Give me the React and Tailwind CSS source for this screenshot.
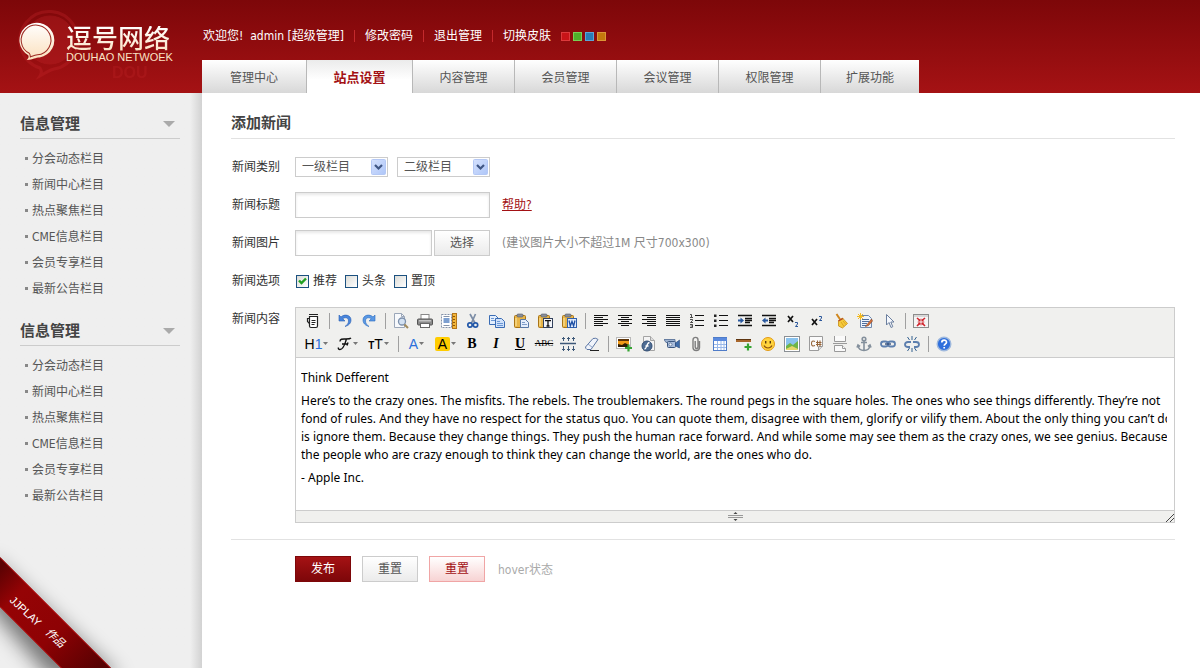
import { Fragment } from 'react';

const topLinks = ['修改密码', '退出管理', '切换皮肤'];

const skins = [
  { name: '红色', className: 'bg-[#c91418] border-[#dd3a3c]' },
  { name: '绿色', className: 'bg-[#4fae2a] border-[#79cf55]' },
  { name: '蓝色', className: 'bg-[#2a7cb5] border-[#5aa6d8]' },
  { name: '橙色', className: 'bg-[#c4780d] border-[#dc9636]' },
];

const tabs = [
  { label: '管理中心', className: 'w-[105px] border-r' },
  { label: '站点设置', className: 'w-[106px] border-r', active: true },
  { label: '内容管理', className: 'w-[102px] border-r' },
  { label: '会员管理', className: 'w-[102px] border-r' },
  { label: '会议管理', className: 'w-[102px] border-r' },
  { label: '权限管理', className: 'w-[102px] border-r' },
  { label: '扩展功能', className: 'w-[98px]' },
];

const menuItems = ['分会动态栏目', '新闻中心栏目', '热点聚焦栏目', 'CME信息栏目', '会员专享栏目', '最新公告栏目'];

/* shared pieces of the toolbar icons */
const Lines = ({ rows }) => (
  <g stroke="#111" strokeWidth="1">
    {rows.map(([x1, x2, y]) => (
      <path key={y} d={`M${x1} ${y}.5H${x2}`} />
    ))}
  </g>
);

const Clipboard = () => (
  <>
    <rect x="1.5" y="2.5" width="11" height="12" rx="1" fill="#e8b548" stroke="#a97415" />
    <rect x="4" y="1" width="6" height="3" rx="1" fill="#8a8f99" stroke="#555b66" strokeWidth=".6" />
    <path d="M3 5v8" stroke="#f8dc8e" strokeWidth="1.4" />
  </>
);

const ChainLink = () => (
  <g fill="none" stroke="#5d7fae" strokeWidth="1.8">
    <rect x="1" y="5.5" width="7" height="5" rx="2.5" />
    <rect x="8" y="5.5" width="7" height="5" rx="2.5" />
    <path d="M5 8h6" stroke="#34507c" strokeWidth="1.4" />
  </g>
);

const undoPath = 'M2 2v6h6L5.8 5.8C8 4 11.500 4.500 11.500 8c0 2.500-1.500 4-3.500 5.500 4-1 6-3.500 6-6.500 0-5-6.500-6.500-10-3z';

const icons = {
  source: (
    <g fill="none" stroke="#222">
      <path d="M4.500 3.500h8v9.500q0 1.500-1.500 1.500H6q-1.500 0-1.500-1.500z" fill="#fff" strokeWidth="1.200" />
      <path d="M4 1.500h9M5 3.500h7M6.500 7.500h4M6.500 9.500h4M6.500 11.500h3" />
      <path d="M4.500 5.500h-2v3l2 2" strokeWidth="1.200" />
    </g>
  ),
  undo: <path d={undoPath} fill="#4a86dc" stroke="#2a5fb4" strokeWidth=".6" />,
  redo: (
    <g transform="matrix(-1 0 0 1 16 0)">
      <path d={undoPath} fill="#5a98e4" stroke="#2a6cc0" strokeWidth=".6" />
    </g>
  ),
  preview: (
    <g fill="none">
      <path d="M1.500.5h7l3 3v11h-10z" fill="#f7f9fc" stroke="#9aa6b8" />
      <path d="M8.500.5v3h3" stroke="#9aa6b8" />
      <circle cx="9" cy="8.500" r="3.500" fill="#d3e2f3" stroke="#7b8fab" strokeWidth="1.300" />
      <path d="M11.500 11.500l3.500 3.500" stroke="#a08a5c" strokeWidth="2" />
    </g>
  ),
  print: (
    <g>
      <rect x="4" y="1.500" width="8" height="5" fill="#fff" stroke="#888" />
      <rect x=".5" y="6" width="15" height="6" rx="1" fill="#8b8b8b" stroke="#555" />
      <rect x="2" y="7" width="12" height="1.500" fill="#c4c4c4" />
      <rect x="3.500" y="10.500" width="9" height="4" fill="#fff" stroke="#666" />
    </g>
  ),
  template: (
    <g>
      <rect x=".5" y="1.500" width="10" height="13" fill="#fff" stroke="#8593a8" strokeDasharray="2 1" />
      <rect x="2.500" y="5" width="6" height="5" fill="#7c9fd0" />
      <path d="M2.500 3.500h6M2.500 12.500h6" stroke="#8593a8" />
      <rect x="11.500" y=".5" width="4" height="15" fill="#f2b63b" stroke="#b4761a" />
      <path d="M12 3.500h2M12 6.500h2M12 9.500h2M12 12.500h2" stroke="#8d5708" />
    </g>
  ),
  cut: (
    <g fill="none">
      <path d="M5 1l5 9M10.500 1L6.500 10" stroke="#7c8da6" strokeWidth="1.700" />
      <circle cx="5" cy="12" r="2.200" stroke="#2459a9" strokeWidth="1.700" />
      <circle cx="10.500" cy="12" r="2.200" stroke="#2459a9" strokeWidth="1.700" />
    </g>
  ),
  copy: (
    <g stroke="#3a6cb4">
      <path d="M.5 2.500h6l3 3v6h-9z" fill="#e3eefc" />
      <path d="M6.500 5.500h6l3 3v6h-9z" fill="#cfe1fa" />
      <path d="M8 8.500h3M8 10.500h6M8 12.500h6M2 5.500h3M2 7.500h4" stroke="#6b97d4" />
    </g>
  ),
  paste: (
    <g>
      <Clipboard />
      <path d="M7.500 6.500h5l3 3v5h-8z" fill="#e5eefb" stroke="#5777a6" />
      <path d="M9 9.500h3M9 11.500h5" stroke="#7f9dc9" />
    </g>
  ),
  plainpaste: (
    <g>
      <Clipboard />
      <rect x="6.500" y="5.500" width="9" height="9" fill="#f4f6fb" stroke="#33415c" />
      <path d="M8 7.700h6M11 7.500v6M9.500 13h3" stroke="#111" strokeWidth="1.300" />
    </g>
  ),
  wordpaste: (
    <g>
      <Clipboard />
      <rect x="6.500" y="5.500" width="9" height="9" fill="#dfeafc" stroke="#3161ad" />
      <path d="M8 7.500l1.300 5.500L11 8.500l1.600 4.500L14 7.500" fill="none" stroke="#1d4fa3" strokeWidth="1.300" />
    </g>
  ),
  left: <Lines rows={[[1, 15, 2], [1, 10, 4], [1, 15, 6], [1, 10, 8], [1, 15, 10], [1, 10, 12]]} />,
  center: <Lines rows={[[1, 15, 2], [4, 12, 4], [1, 15, 6], [4, 12, 8], [1, 15, 10], [4, 12, 12]]} />,
  right: <Lines rows={[[1, 15, 2], [6, 15, 4], [1, 15, 6], [6, 15, 8], [1, 15, 10], [6, 15, 12]]} />,
  full: <Lines rows={[[1, 15, 2], [1, 15, 4], [1, 15, 6], [1, 15, 8], [1, 15, 10], [1, 15, 12]]} />,
  ordered: (
    <g>
      <path d="M1 1.500h1.500V4M1 4.500h3M1 6.500h2.500v1L1.500 9.500H4M1 11.500h2.500v3H1M1.500 13h2" stroke="#222" strokeWidth=".8" fill="none" />
      <Lines rows={[[6, 15, 2], [6, 15, 7], [6, 15, 12]]} />
    </g>
  ),
  unordered: (
    <g>
      <path d="M1 1.500h2.500V4H1zM1 6.500h2.500V9H1zM1 11.500h2.500V14H1z" fill="#222" />
      <Lines rows={[[6, 15, 2], [6, 15, 7], [6, 15, 12]]} />
    </g>
  ),
  indent: (
    <g>
      <path d="M1 2.500h14M8 5.500h7M8 7.500h7M8 9.500h5M1 12.500h14" stroke="#111" strokeWidth="1.500" />
      <path d="M1 6.500h2.500V4.500L7 7.500l-3.500 3v-2H1z" fill="#28589f" />
    </g>
  ),
  outdent: (
    <g>
      <path d="M1 2.500h14M8 5.500h7M8 7.500h7M8 9.500h5M1 12.500h14" stroke="#111" strokeWidth="1.500" />
      <path d="M7 6.500H4.500V4.500L1 7.500l3.500 3v-2H7z" fill="#28589f" />
    </g>
  ),
  sub: (
    <g fill="none">
      <path d="M3 3l5 6M8 3L3 9" stroke="#111" strokeWidth="1.700" />
      <path d="M10 9.500h2.500v1.500L10.500 13.500H13" stroke="#2a579b" />
    </g>
  ),
  sup: (
    <g fill="none">
      <path d="M3 6l5 6M8 6l-5 6" stroke="#111" strokeWidth="1.700" />
      <path d="M10 3.500h2.500V5L10.500 7.500H13" stroke="#2a579b" />
    </g>
  ),
  clear: (
    <g>
      <path d="M3.500 1l4 6" stroke="#d0871f" strokeWidth="2" />
      <path d="M5.500 7.500l4-2.500 5 5.500-5 4.500-4-2z" fill="#f5cb3c" stroke="#c68d15" strokeWidth=".8" />
      <path d="M8 9l3 4.500M10 8l3 3.500" stroke="#d79b1b" strokeWidth=".8" />
      <path d="M5.500 8L10 5.500" stroke="#b4412a" strokeWidth="1.300" />
    </g>
  ),
  quickformat: (
    <g>
      <path d="M3.500 2.500h8l3 3v9h-11z" fill="#edf3fc" stroke="#7089ad" />
      <path d="M5 6.500h7M5 8.500h7M5 10.500h5M5 12.500h4" stroke="#4f6f9e" />
      <path d="M14.500 6L8.500 13.500l3-1L15.500 8z" fill="#d9703a" stroke="#7e3c1a" strokeWidth=".6" />
      <path d="M3.500 0v7M0 3.500h7M1 1l5 5M6 1L1 6" stroke="#f3b91f" />
    </g>
  ),
  selectall: <path d="M5.500 1.500v10.500l2.500-2.500 2 5 1.800-.8-2-4.700H13z" fill="#f5f8fd" stroke="#6b7f9e" />,
  fullscreen: (
    <g>
      <rect x=".5" y="1.500" width="15" height="13" fill="#f5f5f5" stroke="#8c8c8c" />
      <path d="M1 3h14" stroke="#bbb" />
      <path d="M4 5l3 2.500M12 5L9 7.500M4 13l3-3M12 13l-3-3" stroke="#d0232b" strokeWidth="1.600" />
      <path d="M7.500 5.500v3h-3zM8.500 5.500v3h3zM7.500 12.500v-3h-3zM8.500 12.500v-3h3z" fill="#d0232b" />
    </g>
  ),
  lineheight: (
    <g stroke="#3d5878" fill="none">
      <path d="M0 7.500h16" strokeWidth="1.500" />
      <path d="M3.500 1v4M8.500 1v4M13.500 1v4M3.500 10v5M8.500 10v5M13.500 10v5" />
      <path d="M2 2.500h3M7 2.500h3M12 2.500h3M2 13.500h3M7 13.500h3M12 13.500h3" />
    </g>
  ),
  eraser: (
    <g>
      <path d="M1.500 11L9 2.500q3-1 5 1L7 13.500H3q-1.500-1-1.500-2.500z" fill="#f0f4fb" stroke="#5c76a3" />
      <path d="M4 8l4.500 3.500" stroke="#8ea4c9" />
      <path d="M6 14.500h9" stroke="#222" />
    </g>
  ),
  image: (
    <g>
      <rect x=".5" y="1.500" width="14" height="11" fill="#fff" stroke="#b9b9b9" />
      <rect x="2" y="3" width="11" height="8" fill="#f09a17" />
      <path d="M2 3h11v2H2z" fill="#5c3307" />
      <path d="M2 11V8l4 1 3-2 4 2v2z" fill="#2e1c06" />
      <path d="M12.500 8.500v7M9 12h7" stroke="#36a534" strokeWidth="2.200" />
    </g>
  ),
  flash: (
    <g>
      <path d="M3.500.5h7l4 4v10h-11z" fill="#f4f4f4" stroke="#a4a4a4" />
      <path d="M10.500.5v4h4" fill="#ddd" stroke="#a4a4a4" />
      <circle cx="7" cy="10" r="5" fill="#4d6c93" stroke="#314d74" />
      <path d="M9.500 6.500c-3 0-2.500 6.500-5 6.500M5.500 10h3" stroke="#fff" strokeWidth="1.300" fill="none" />
    </g>
  ),
  media: (
    <g>
      <path d="M0 3.500h11v3H2z" fill="#9db3d1" stroke="#4e6890" strokeWidth=".8" />
      <rect x="3.500" y="5.500" width="8" height="6" rx="1" fill="#a9bddb" stroke="#3c5880" />
      <path d="M11.500 7L15.500 4v8l-4-2z" fill="#3e6ba8" stroke="#2a4d80" strokeWidth=".6" />
      <circle cx="6.500" cy="8.500" r="1.500" fill="#f0f5fc" stroke="#3c5880" strokeWidth=".6" />
    </g>
  ),
  file: (
    <path
      d="M11.500 5v6.500c0 4-6.500 4-6.500 0V4c0-3.500 5-3.500 5 0v7c0 2-2.800 2-2.800 0V5"
      fill="none"
      stroke="#7d7d7d"
      strokeWidth="1.400"
    />
  ),
  table: (
    <g>
      <rect x="1.500" y="1.500" width="13" height="13" fill="#fff" stroke="#4f7cc8" />
      <path d="M1 2h14v3H1z" fill="#5a8ade" />
      <path d="M2 8.500h12M2 11.500h12M5.500 5v9M9 5v9M12 5v9" stroke="#9ab9ea" />
    </g>
  ),
  hr: (
    <g>
      <rect x="0" y="3" width="15" height="3" fill="#a8672c" />
      <path d="M0 3.500h15" stroke="#5e3510" />
      <path d="M12 7.500v7M8.500 11h7" stroke="#36a534" strokeWidth="2.200" />
    </g>
  ),
  emoticons: (
    <g>
      <circle cx="8" cy="8" r="6.500" fill="#ffd33c" stroke="#e39a16" />
      <path d="M5.700 5v2.500M10.300 5v2.500" stroke="#5b3a0c" strokeWidth="1.400" />
      <path d="M4 9.500c1.500 3.300 6.500 3.300 8 0" fill="none" stroke="#8f520e" strokeWidth="1.100" />
    </g>
  ),
  map: (
    <g>
      <rect x=".5" y=".5" width="15" height="15" fill="#fff" stroke="#8a8f94" />
      <rect x="2" y="2" width="12" height="12" fill="#8ac3ee" />
      <path d="M2 10l4-3 3 2 5-4v9H2z" fill="#6fb547" />
      <path d="M2 13l6-3 6 3v1H2z" fill="#e6d66c" />
    </g>
  ),
  code: (
    <g>
      <path d="M1.500.5h13v10l-4 4h-9z" fill="#fbfbfb" stroke="#9b9b9b" />
      <path d="M14.500 10.500h-4v4" fill="#ddd" stroke="#9b9b9b" />
      <path d="M7 5.500q-3.500-1.500-3.500 2T7 9.500M9.500 4.500v6M12 4.500v6M8 6.500h5.500M8 8.500h5.500" fill="none" stroke="#96653a" strokeWidth="1.100" />
    </g>
  ),
  pagebreak: (
    <g fill="#fafafa" stroke="#9a9a9a">
      <path d="M2.500 0v5.500h11V0" />
      <path d="M2.500 15.500v-6h8l3 3v3z" />
      <path d="M1 7.500h14" />
      <path d="M10.500 9.500v3h3" />
    </g>
  ),
  anchor: (
    <g fill="none" stroke="#84909c" strokeWidth="1.600">
      <circle cx="8" cy="3" r="1.800" />
      <path d="M8 5v9.500M5 6.500h6M2 9.500c.5 3.500 3 5 6 5s5.500-1.500 6-5M1 11.500l1-2.500 2 1.500M15 11.500L14 9l-2 1.500" />
    </g>
  ),
  link: <ChainLink />,
  unlink: (
    <g>
      <g fill="none" stroke="#5d7fae" strokeWidth="1.800">
        <path d="M7 6H4q-3 0-3 2.500T4 11h2M9 6h3q3 0 3 2.500T12 11h-2" />
      </g>
      <path d="M8 0v4M3.500 1l2 3M12.500 1l-2 3M8 16v-4M3.500 15l2-3M12.500 15l-2-3" stroke="#33608f" />
    </g>
  ),
  about: (
    <g>
      <circle cx="8" cy="8" r="6.800" fill="#2f6fdc" stroke="#9fb9dd" strokeWidth="1.400" />
      <path d="M5.800 6.500c0-3 4.700-3 4.700-.3 0 1.700-2.300 1.700-2.300 3.600M8.200 11v1.500" stroke="#fff" strokeWidth="1.700" fill="none" />
    </g>
  ),
};

const rowOne = [
  ['source'],
  ['undo', 'redo'],
  ['preview', 'print', 'template', 'cut', 'copy', 'paste', 'plainpaste', 'wordpaste'],
  ['left', 'center', 'right', 'full', 'ordered', 'unordered', 'indent', 'outdent', 'sub', 'sup', 'clear', 'quickformat', 'selectall'],
  ['fullscreen'],
];

const insertTools = ['image', 'flash', 'media', 'file', 'table', 'hr', 'emoticons', 'map', 'code', 'pagebreak', 'anchor', 'link', 'unlink'];

function Tool({ name }) {
  return (
    <button type="button" aria-label={name} className="flex h-[23px] w-6 shrink-0 items-center justify-center">
      <svg width="16" height="16" viewBox="0 0 16 16" aria-hidden="true">
        {icons[name]}
      </svg>
    </button>
  );
}

function Divider() {
  return (
    <span className="flex w-2 shrink-0 items-center justify-center">
      <span className="h-4 w-px bg-[#a0a0a0]" />
    </span>
  );
}

function DropTool({ label, className, children }) {
  return (
    <button
      type="button"
      aria-label={label}
      className={`flex h-[23px] shrink-0 items-center justify-center gap-px text-sm leading-none text-black ${className}`}
    >
      {children}
      <svg width="5" height="3" viewBox="0 0 5 3" aria-hidden="true">
        <path d="M0 0h5L2.500 3z" fill="#777" />
      </svg>
    </button>
  );
}

function LetterTool({ label, className, children }) {
  return (
    <button
      type="button"
      aria-label={label}
      className={`flex h-[23px] w-6 shrink-0 items-center justify-center font-['Liberation_Serif'] leading-none text-black ${className}`}
    >
      {children}
    </button>
  );
}

function Editor() {
  return (
    <div className="min-w-0 flex-1 border border-[#ccc]">
      <div className="border-b border-[#ccc] bg-[#f0f0ee] px-[5px] pt-px pb-[2px]">
        <div className="flex">
          {rowOne.map((group, i) => (
            <Fragment key={group[0]}>
              {i > 0 && <Divider />}
              {group.map((name) => (
                <Tool key={name} name={name} />
              ))}
            </Fragment>
          ))}
        </div>
        <div className="flex font-['Liberation_Sans']">
          <DropTool label="段落" className="w-[31px]">
            <span>H<span className="text-[#2a6fdb]">1</span></span>
          </DropTool>
          <DropTool label="字体" className="w-[31px]">
            <svg width="15" height="14" viewBox="0 0 15 14" fill="none" stroke="#111" strokeWidth="1.400" aria-hidden="true">
              <path d="M3 4.500C3 1.500 6 2 9 2s4 0 5-1M9.500 2C8 6 7 12.500 3 12.500c-1.500 0-2-1-1.500-2M5 7h6M11 5.500l-1 3" />
            </svg>
          </DropTool>
          <DropTool label="文字大小" className="w-[31px]">
            <span><span className="text-[10px] font-bold">T</span>T</span>
          </DropTool>
          <Divider />
          <DropTool label="文字颜色" className="w-[29px]">
            <span className="text-[#2a6fdb]">A</span>
          </DropTool>
          <DropTool label="文字背景" className="w-[29px]">
            <span className="rounded-xs bg-[#ffcc00] px-[3px]">A</span>
          </DropTool>
          <LetterTool label="粗体" className="text-sm font-black">B</LetterTool>
          <LetterTool label="斜体" className="text-sm font-bold italic">I</LetterTool>
          <LetterTool label="下划线" className="text-sm font-bold underline">U</LetterTool>
          <LetterTool label="删除线" className="text-[9px] line-through">ABC</LetterTool>
          <Tool name="lineheight" />
          <Tool name="eraser" />
          <Divider />
          {insertTools.map((name) => (
            <Tool key={name} name={name} />
          ))}
          <Divider />
          <Tool name="about" />
        </div>
      </div>

      <div className="min-h-[152px] pt-[11px] pr-[7px] pl-[5px]">
        <div
          role="textbox"
          aria-multiline="true"
          aria-labelledby="content-label"
          contentEditable
          suppressContentEditableWarning
          className="space-y-[5px] overflow-hidden font-['Noto_Sans'] leading-[18px] whitespace-nowrap text-black outline-none"
        >
          <p>Think Defferent</p>
          <p>
            Here’s to the crazy ones. The misfits. The rebels. The troublemakers. The round pegs in the square holes. The ones who see things differently. They’re not<br />
            fond of rules. And they have no respect for the status quo. You can quote them, disagree with them, glorify or vilify them. About the only thing you can’t do<br />
            is ignore them. Because they change things. They push the human race forward. And while some may see them as the crazy ones, we see genius. Because<br />
            the people who are crazy enough to think they can change the world, are the ones who do.
          </p>
          <p>- Apple Inc.</p>
        </div>
      </div>

      <div className="relative flex h-3 items-center justify-center border-t border-[#ccc] bg-[#f0f0ee]">
        <svg width="15" height="9" viewBox="0 0 15 9" aria-hidden="true">
          <path d="M0 3.500h15M0 5.500h15" stroke="#999" />
          <path d="M5.500 2L7.500 0l2 2zM5.500 7l2 2 2-2z" fill="#444" />
        </svg>
        <svg className="absolute right-0 bottom-0" width="8" height="8" viewBox="0 0 8 8" aria-hidden="true">
          <path d="M0 8l8-8M4 8l4-4" stroke="#444" />
        </svg>
      </div>
    </div>
  );
}

function Logo() {
  return (
    <a href="#" aria-label="逗号网络" className="relative flex h-[93px] w-[202px] shrink-0 items-start overflow-hidden pl-[18px]">
      <svg className="absolute top-0 left-0" width="202" height="93" viewBox="0 0 202 93" aria-hidden="true">
        <g fill="none" stroke="#c8282c" opacity=".3">
          <path d="M40 68a29 29 0 1 1 14 1c-5 1-8 4-14 7 2-3 2-5 0-8z" strokeWidth="3" />
          <circle cx="50" cy="40" r="24" fill="#c8282c" strokeWidth="1" />
        </g>
        <text x="112" y="78" fontFamily="Liberation Sans" fontWeight="700" fontSize="16" fill="#c8282c" opacity=".25">DOU</text>
      </svg>
      <svg className="relative mt-[22px] shrink-0" width="37" height="39" viewBox="1 1 36 38" aria-hidden="true">
        <defs>
          <linearGradient id="bubble" x1="0" y1="0" x2="0" y2="1">
            <stop offset="0" stopColor="#fff" />
            <stop offset="1" stopColor="#fbe0bd" />
          </linearGradient>
        </defs>
        <path d="M11 33.500A17 17 0 1 1 22 35.500c-4 0-6 2-12.500 2.500 2-2 2-3 1.500-4.500z" fill="url(#bubble)" />
        <path d="M12 31.500A14.500 14.500 0 1 1 20 33c-3 .5-4 1-7 2 0-1 0-2-1-3.500z" fill="none" stroke="#9d2a22" />
      </svg>
      <span className="relative mt-[26px] ml-[11px] flex flex-col">
        <span className="bg-linear-to-b from-white to-[#fbe3c5] bg-clip-text text-[26px] leading-[26px] font-medium whitespace-nowrap text-transparent">
          逗号网络
        </span>
        <span className="font-['Liberation_Sans'] text-[11px] leading-[10px] whitespace-nowrap text-[#fbe3c5]">
          DOUHAO NETWOEK
        </span>
      </span>
    </a>
  );
}

function SideSection({ title }) {
  return (
    <section>
      <h2 className="flex h-[46px] items-center justify-between border-b border-[#ccc] pt-4 text-[15px] font-bold text-[#444]">
        {title}
        <button type="button" aria-label="收起" className="mr-[5px]">
          <svg width="12" height="6" viewBox="0 0 12 6" aria-hidden="true">
            <path d="M0 0h12L6 6z" fill="#aaa" />
          </svg>
        </button>
      </h2>
      <ul className="pt-[5px] pl-[5px]">
        {menuItems.map((item) => (
          <li key={item} className="flex h-[26px] items-center gap-1 pt-[3px]">
            <span className="size-[3px] bg-[#888]" />
            <a href="#" className="text-[#555]">{item}</a>
          </li>
        ))}
      </ul>
    </section>
  );
}

function Ribbon() {
  return (
    <svg className="absolute bottom-0 left-0" width="160" height="150" viewBox="0 0 160 150" aria-hidden="true">
      <defs>
        <linearGradient id="ribbon" x1="0" y1="50" x2="100" y2="150" gradientUnits="userSpaceOnUse">
          <stop offset="0" stopColor="#5c0203" />
          <stop offset=".22" stopColor="#950305" />
          <stop offset=".6" stopColor="#8e0204" />
          <stop offset="1" stopColor="#560102" />
        </linearGradient>
        <filter id="ribbon-shadow" x="-50%" y="-50%" width="200%" height="200%">
          <feGaussianBlur stdDeviation="10" />
        </filter>
      </defs>
      <path d="M-10 40L120 160H50L-10 90z" fill="#000" opacity=".5" filter="url(#ribbon-shadow)" />
      <path d="M0 39l111 111H61L0 89z" fill="url(#ribbon)" />
      <path d="M0 39.500L110.500 150M0 88.500L61.500 150" stroke="#bb1012" />
      <g transform="translate(9 83) rotate(43)" fill="#fff">
        <text x="0" y="0" fontFamily="Liberation Sans" fontSize="11">JJPLAY</text>
        <text x="48" y="-1" fontFamily="Noto Sans CJK SC" fontStyle="italic" fontSize="11">作品</text>
      </g>
    </svg>
  );
}

function Select({ id, label }) {
  return (
    <span className="relative flex">
      <select
        id={id}
        aria-label={label}
        className="h-5 w-[93px] appearance-none border border-[#ccc] bg-white pl-[6px] text-[#555]"
      >
        <option>{label}</option>
      </select>
      <svg className="pointer-events-none absolute top-[2px] right-[2px]" width="15" height="16" viewBox="0 0 15 16" aria-hidden="true">
        <defs>
          <linearGradient id={`${id}-arrow`} x1="0" y1="0" x2="1" y2="1">
            <stop offset="0" stopColor="#d5e1fd" />
            <stop offset="1" stopColor="#aec6f8" />
          </linearGradient>
        </defs>
        <rect x=".5" y=".5" width="14" height="15" rx="1" fill={`url(#${id}-arrow)`} stroke="#b4c8f5" />
        <path d="M4 6l3.500 3.500L11 6" fill="none" stroke="#3f5684" strokeWidth="2.200" />
      </svg>
    </span>
  );
}

function Check({ label, checked }) {
  return (
    <label className="flex items-center gap-1">
      <span className="relative flex">
        <input
          type="checkbox"
          defaultChecked={checked}
          className="peer size-[13px] appearance-none border border-[#1c5180] bg-linear-to-br from-[#dcdcd7] to-white"
        />
        <svg
          className="pointer-events-none absolute inset-0 hidden peer-checked:block"
          width="13"
          height="13"
          viewBox="0 0 13 13"
          aria-hidden="true"
        >
          <path d="M3 5.500l2.500 2.500L10 3.500" fill="none" stroke="#21a121" strokeWidth="2.400" />
        </svg>
      </span>
      {label}
    </label>
  );
}

const labelClass = 'w-16 shrink-0 pl-px text-[#333]';
const inputClass = 'h-[26px] border border-[#ccc] bg-white px-2 shadow-[inset_0_2px_3px_#e8e8e8] outline-none';
const greyButton = 'h-[26px] w-14 border border-[#ccc] bg-linear-to-b from-white to-[#ebebeb] text-[#555]';

export default function App() {
  return (
    <div className="flex min-h-screen flex-col bg-white text-[12px] leading-[18px] text-[#333] [font-family:'DejaVu_Sans_Condensed','Noto_Sans','Noto_Sans_CJK_SC',sans-serif]">
      <header className="flex bg-linear-to-b from-[#7d0709] to-[#a51214]">
        <Logo />
        <div className="flex-1">
          <div className="flex h-[60px] items-center gap-[10px] pt-3 pl-px text-white">
            <span>欢迎您! &nbsp;admin [超级管理]</span>
            {topLinks.map((link) => (
              <Fragment key={link}>
                <span className="h-3 w-px bg-[#c42a2d]" />
                <a href="#">{link}</a>
              </Fragment>
            ))}
            <span className="flex gap-[3px]">
              {skins.map((skin) => (
                <button key={skin.name} type="button" aria-label={skin.name} className={`size-[9px] border ${skin.className}`} />
              ))}
            </span>
          </div>
          <nav className="flex h-[33px]">
            {tabs.map((tab) => (
              <a
                key={tab.label}
                href="#"
                className={`flex items-center justify-center border-[#b8b8b8] pt-[3px] ${tab.className} ${
                  tab.active
                    ? 'bg-linear-to-b from-[#ebebeb] to-white to-60% text-[13px] font-bold text-[#a31114]'
                    : 'bg-linear-to-b from-white to-[#d8d8d8] text-[#555]'
                }`}
              >
                {tab.label}
              </a>
            ))}
          </nav>
        </div>
      </header>

      <div className="flex flex-1">
        <aside className="relative w-[202px] shrink-0 bg-[#efefef] bg-linear-to-l from-[#d2d2d2] to-[#efefef] to-[12px] pr-[22px] pb-[150px] pl-5">
          <SideSection title="信息管理" />
          <SideSection title="信息管理" />
          <Ribbon />
        </aside>

        <main className="min-w-0 flex-1 pr-[25px] pl-[29px]">
          <h1 className="flex h-[46px] items-center border-b border-[#e2e2e2] pt-[14px] text-[15px] font-bold text-[#444]">添加新闻</h1>
          <form onSubmit={(e) => e.preventDefault()}>
            <div className="pt-[9px]">
              <div className="flex h-[38px] items-center">
                <label htmlFor="category" className={labelClass}>新闻类别</label>
                <span className="flex gap-[9px]">
                  <Select id="category" label="一级栏目" />
                  <Select id="subcategory" label="二级栏目" />
                </span>
              </div>
              <div className="flex h-[38px] items-center">
                <label htmlFor="title" className={labelClass}>新闻标题</label>
                <input id="title" type="text" className={`w-[195px] ${inputClass}`} />
                <a href="#" className="ml-3 text-[#a31114] underline">帮助?</a>
              </div>
              <div className="flex h-[38px] items-center">
                <label htmlFor="picture" className={labelClass}>新闻图片</label>
                <input id="picture" type="text" className={`w-[137px] ${inputClass}`} />
                <button type="button" className={`ml-[2px] ${greyButton}`}>选择</button>
                <span className="ml-3 text-[#888]">(建议图片大小不超过1M 尺寸700x300)</span>
              </div>
              <div className="flex h-[38px] items-center" role="group" aria-labelledby="options-label">
                <span id="options-label" className={labelClass}>新闻选项</span>
                <span className="flex gap-2 pl-px">
                  <Check label="推荐" checked />
                  <Check label="头条" />
                  <Check label="置顶" />
                </span>
              </div>
            </div>

            <div className="flex pt-[7px]">
              <span id="content-label" className={`${labelClass} pt-[3px]`}>新闻内容</span>
              <Editor />
            </div>

            <div className="mt-4 flex items-center border-t border-[#e2e2e2] py-4 pl-16">
              <button type="submit" className="h-[26px] w-14 border border-[#7d0709] bg-linear-to-b from-[#a51214] to-[#7d0709] text-white">
                发布
              </button>
              <button type="reset" className={`ml-[11px] ${greyButton}`}>重置</button>
              <button type="reset" className="ml-[11px] h-[26px] w-14 border border-[#f0a5a5] bg-linear-to-b from-white to-[#f7d3d3] text-[#a31114]">
                重置
              </button>
              <span className="ml-[13px] pt-[2px] text-[#aaa]">hover状态</span>
            </div>
          </form>
        </main>
      </div>
    </div>
  );
}
